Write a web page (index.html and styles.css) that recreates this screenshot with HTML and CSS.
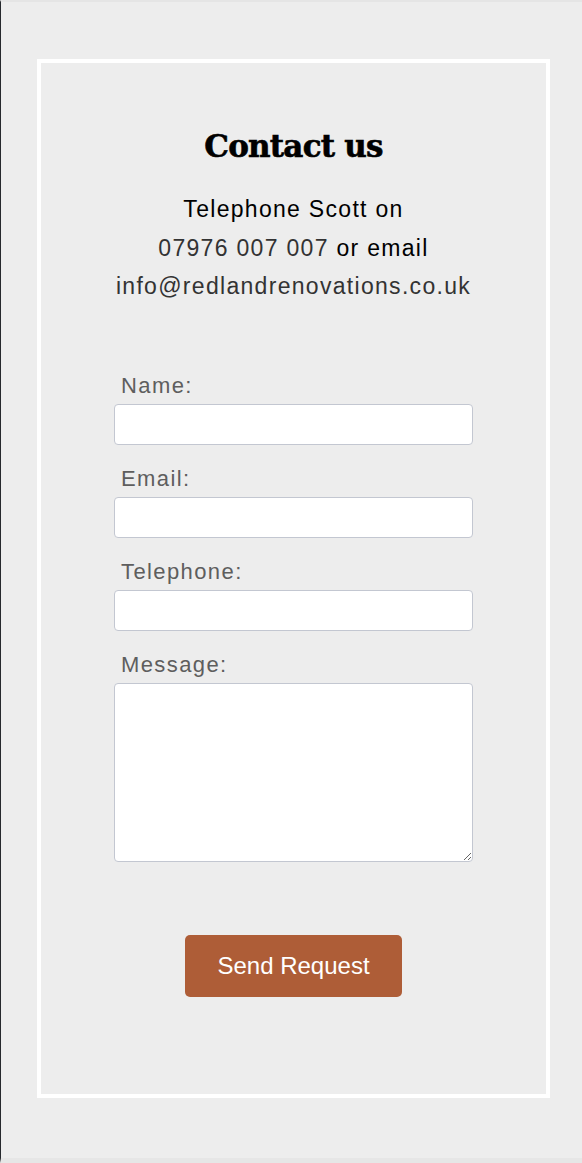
FILE: index.html
```html
<!DOCTYPE html>
<html lang="en">
<head>
<meta charset="utf-8">
<title>Contact us</title>
<link rel="stylesheet" href="styles.css">
</head>
<body>
<div class="page">
  <section class="contact-box">
    <h1 class="title">Contact us</h1>
    <p class="intro">Telephone Scott on<br><a class="link" href="#">07976 007 007</a> or email<br><a class="link" href="#">info@redlandrenovations.co.uk</a></p>
    <form class="form">
      <div class="field">
        <label class="label" for="name">Name:</label>
        <input class="input" id="name" type="text">
      </div>
      <div class="field">
        <label class="label" for="email">Email:</label>
        <input class="input" id="email" type="email">
      </div>
      <div class="field">
        <label class="label" for="tel">Telephone:</label>
        <input class="input" id="tel" type="tel">
      </div>
      <div class="field">
        <label class="label" for="msg">Message:</label>
        <textarea class="input textarea" id="msg"></textarea>
      </div>
      <button class="submit" type="button">Send Request</button>
    </form>
  </section>
</div>
</body>
</html>
```

FILE: styles.css
```css
html, body {
  margin: 0;
  padding: 0;
  background: #ededed;
}

.page {
  box-sizing: border-box;
  min-height: 1163px;
  border-left: 1px solid #26292d;
  border-top: 2px solid #e5e5e5;
  border-bottom: 5px solid #e6e6e6;
  padding: 57px 0 0 36px;
  font-family: "Liberation Sans", Arial, sans-serif;
}

.contact-box {
  box-sizing: border-box;
  width: 513px;
  height: 1039px;
  border: 4px solid #ffffff;
  padding-top: 65px;
  display: flex;
  flex-direction: column;
  align-items: center;
}

.title {
  margin: 0;
  font-family: "DejaVu Serif", serif;
  font-weight: 900;
  font-size: 31px;
  line-height: 36px;
  letter-spacing: -0.8px;
  color: #000;
  -webkit-text-stroke: 0.6px #000;
}

.intro {
  margin: 26px 0 0;
  text-align: center;
  font-size: 23px;
  line-height: 38.5px;
  letter-spacing: 1.3px;
  color: #000;
}

.link {
  color: #333;
  text-decoration: none;
}

.form {
  margin-top: 67px;
  width: 359px;
  display: flex;
  flex-direction: column;
  gap: 21px;
}

.field {
  display: flex;
  flex-direction: column;
  gap: 5px;
}

.label {
  padding-left: 7px;
  font-size: 22px;
  line-height: 26px;
  letter-spacing: 1.4px;
  color: #5e5e5e;
}

.input {
  box-sizing: border-box;
  width: 359px;
  height: 41px;
  margin: 0;
  border: 1px solid #c3c7d1;
  border-radius: 4px;
  background: #fff;
  font-family: "Liberation Sans", Arial, sans-serif;
  font-size: 18px;
  padding: 4px 8px;
}

.textarea {
  height: 179px;
  resize: both;
}

.submit {
  align-self: center;
  margin-top: 52px;
  width: 217px;
  height: 62px;
  border: none;
  border-radius: 5px;
  background: #ae5d37;
  color: #fff;
  font-family: "Liberation Sans", Arial, sans-serif;
  font-size: 24px;
  cursor: pointer;
}
```
